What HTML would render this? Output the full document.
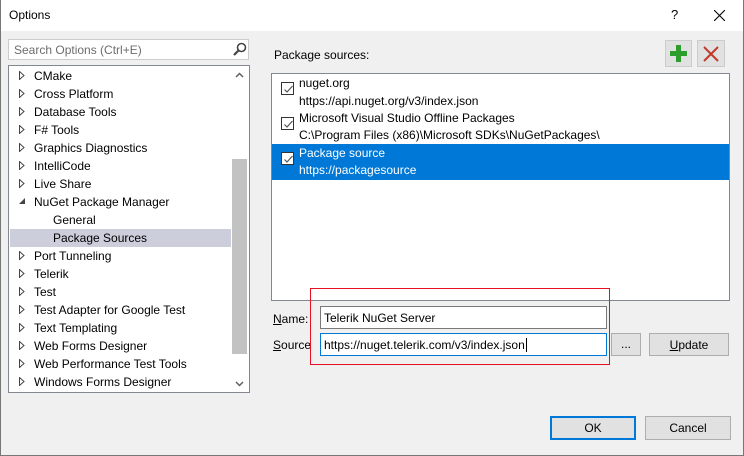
<!DOCTYPE html><html><head><style>
*{box-sizing:border-box;margin:0;padding:0}
body{width:744px;height:456px;background:#f0f0f0;font-family:"Segoe UI","Liberation Sans",sans-serif;font-size:12px;color:#000;position:relative;overflow:hidden}
.a{position:absolute;white-space:nowrap}
.tb{position:absolute;left:0;top:0;width:744px;height:31px;background:#fff}
.row{position:absolute;left:10px;width:221px;height:18px;line-height:18px}
.btn{position:absolute;background:#e1e1e1;border:1px solid #adadad;text-align:center}
.cb{position:absolute;left:281px;width:13px;height:13px;border:1px solid #333;background:#fff}
.cb svg{position:absolute;left:1px;top:1px}
</style></head><body>
<div class="tb"></div>
<div class="a" style="left:9px;top:8px;font-size:12px">Options</div>
<div class="a" style="left:671px;top:7px;font-size:13px">?</div>
<svg class="a" style="left:714px;top:10px" width="11" height="11"><path d="M0 0L11 11M11 0L0 11" stroke="#000" stroke-width="1.1"/></svg>
<div class="a" style="left:8px;top:39px;width:241px;height:21px;background:#fff;border:1px solid #ccc"></div>
<div class="a" style="left:14px;top:43px;color:#6d6d6d">Search Options (Ctrl+E)</div>
<svg class="a" style="left:233px;top:42px" width="14" height="14"><circle cx="8.5" cy="5.5" r="4" fill="none" stroke="#444" stroke-width="1.6"/><path d="M6 8L1 13" stroke="#444" stroke-width="2.2"/></svg>
<div class="a" style="left:8px;top:65px;width:242px;height:328px;background:#fff;border:1px solid #828790"></div>
<div class="a" style="left:232px;top:159px;width:15px;height:195px;background:#c2c2c2"></div>
<svg class="a" style="left:235px;top:72px" width="9" height="6"><path d="M1 5L4.5 1.5L8 5" fill="none" stroke="#606060" stroke-width="1.5"/></svg>
<svg class="a" style="left:235px;top:381px" width="9" height="6"><path d="M1 1L4.5 4.5L8 1" fill="none" stroke="#606060" stroke-width="1.5"/></svg>
<div class="row" style="top:229px;background:#cccedb"></div>
<div id="tree"></div>
<script>
var it=[["CMake",1],["Cross Platform",1],["Database Tools",1],["F# Tools",1],["Graphics Diagnostics",1],["IntelliCode",1],["Live Share",1],["NuGet Package Manager",2],["General",0],["Package Sources",0],["Port Tunneling",1],["Telerik",1],["Test",1],["Test Adapter for Google Test",1],["Text Templating",1],["Web Forms Designer",1],["Web Performance Test Tools",1],["Windows Forms Designer",1]];
var h="";it.forEach(function(e,i){var t=66+i*18;var x=e[1]?34:53;
if(e[1]==1)h+='<svg class="a" style="left:19px;top:'+(t+5)+'px" width="6" height="9"><path d="M0.5 0.5L5 4.5L0.5 8.5Z" fill="#fff" stroke="#444" stroke-width="1"/></svg>';
if(e[1]==2)h+='<svg class="a" style="left:19px;top:'+(t+6)+'px" width="7" height="7"><path d="M6 0L6 6L0 6Z" fill="#444"/></svg>';
h+='<div class="a" style="left:'+x+'px;top:'+(t+2)+'px;line-height:16px">'+e[0]+'</div>';});
document.getElementById("tree").innerHTML=h;
</script>
<div class="a" style="left:274px;top:48px">Package sources:</div>
<div class="btn" style="left:665px;top:40px;width:27px;height:27px;border-color:#ccc"></div>
<svg class="a" style="left:670px;top:45px" width="17" height="17"><path d="M6 0h5v6h6v5h-6v6h-5v-6h-6v-5h6z" fill="#2d9e2d"/></svg>
<div class="btn" style="left:697px;top:40px;width:28px;height:27px;border-color:#ccc"></div>
<svg class="a" style="left:703px;top:46px" width="16" height="16"><path d="M1 1L15 15M15 1L1 15" stroke="#c1392b" stroke-width="2"/></svg>
<div class="a" style="left:271px;top:73px;width:459px;height:228px;background:#fff;border:1px solid #828790"></div>
<div class="a" style="left:272px;top:144px;width:457px;height:36px;background:#0078d7"></div>
<div class="cb" style="top:82px"><svg width="11" height="11"><path d="M1.5 5.5L4 8L9.5 2" fill="none" stroke="#555" stroke-width="1.2"/></svg></div>
<div class="cb" style="top:117px"><svg width="11" height="11"><path d="M1.5 5.5L4 8L9.5 2" fill="none" stroke="#555" stroke-width="1.2"/></svg></div>
<div class="cb" style="top:152px"><svg width="11" height="11"><path d="M1.5 5.5L4 8L9.5 2" fill="none" stroke="#555" stroke-width="1.2"/></svg></div>
<div class="a" style="left:299px;top:76px">nuget.org</div>
<div class="a" style="left:299px;top:94px">https://api.nuget.org/v3/index.json</div>
<div class="a" style="left:299px;top:111px">Microsoft Visual Studio Offline Packages</div>
<div class="a" style="left:299px;top:128px">C:\Program Files (x86)\Microsoft SDKs\NuGetPackages\</div>
<div class="a" style="left:299px;top:146px;color:#fff">Package source</div>
<div class="a" style="left:299px;top:163px;color:#fff">https://packagesource</div>
<div class="a" style="left:273px;top:312px"><u>N</u>ame:</div>
<div class="a" style="left:273px;top:338px"><u>S</u>ource</div>
<div class="a" style="left:320px;top:306px;width:287px;height:23px;background:#fff;border:1px solid #7a7a7a"></div>
<div class="a" style="left:324px;top:311px">Telerik NuGet Server</div>
<div class="a" style="left:320px;top:333px;width:287px;height:23px;background:#fff;border:1px solid #0078d7"></div>
<div class="a" style="left:324px;top:338px">https://nuget.telerik.com/v3/index.json<span style="border-left:1px solid #000;margin-left:1px"></span></div>
<div class="a" style="left:310px;top:288px;width:300px;height:77px;border:1px solid #e81123"></div>
<div class="btn" style="left:611px;top:333px;width:30px;height:23px;line-height:21px">...</div>
<div class="btn" style="left:649px;top:333px;width:80px;height:23px;line-height:22px"><u>U</u>pdate</div>
<div class="btn" style="left:550px;top:416px;width:86px;height:24px;line-height:21px;border:2px solid #0078d7">OK</div>
<div class="btn" style="left:645px;top:416px;width:86px;height:24px;line-height:23px">Cancel</div>
<div class="a" style="left:0;top:0;width:744px;height:456px;border:1px solid #777;border-top:none"></div>
</body></html>
